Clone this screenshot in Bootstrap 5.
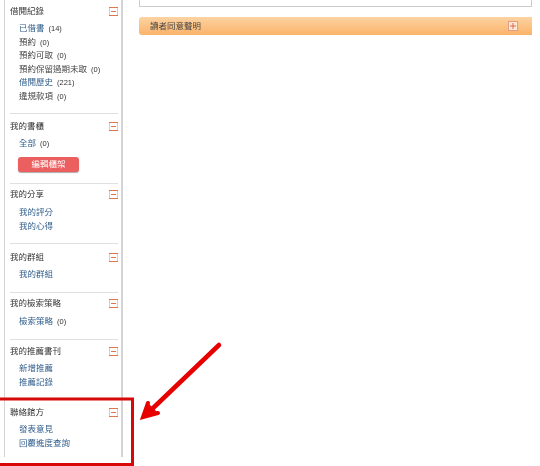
<!DOCTYPE html>
<html lang="zh-Hant">
  <head>
    <meta charset="UTF-8" />
    <meta name="viewport" content="width=device-width, initial-scale=1.0" />
    <title>我的圖書館</title>
    <link
      href="https://cdn.jsdelivr.net/npm/bootstrap@5.3.2/dist/css/bootstrap.min.css"
      rel="stylesheet"
    />
    <style>
      body {
        width: 540px;
        height: 466px;
        overflow: hidden;
        background: #fff;
        font-family: "Liberation Sans", "Noto Sans CJK TC", sans-serif;
        font-size: 8.5px;
        color: #333;
      }
      .side-panel {
        width: 119px;
        height: 457px;
        margin-left: 4px;
        border-left: 1px solid #d4d4d4;
        border-right: 2px solid #d4d4d4;
      }
      .side-sec {
        margin: 0 3px 0 5px;
        border-bottom: 1px solid #e0e0e0;
      }
      .side-sec:nth-child(1) { height: 114px; padding-top: 4px; }
      .side-sec:nth-child(2) { height: 70px; padding-top: 5px; }
      .side-sec:nth-child(3) { height: 60px; padding-top: 3px; }
      .side-sec:nth-child(4) { height: 49px; padding-top: 6px; }
      .side-sec:nth-child(5) { height: 47px; padding-top: 3px; }
      .side-sec:nth-child(6) { height: 58px; padding-top: 4px; border-bottom: 0; }
      .side-sec:nth-child(7) { padding-top: 7px; border-bottom: 0; }
      .side-sec:nth-child(3) .sec-links,
      .side-sec:nth-child(5) .sec-links {
        margin-top: 5px;
      }
      .sec-head {
        line-height: 14px;
        color: #333;
      }
      .sec-links {
        margin-top: 4px;
        padding-left: 9px;
        line-height: 13.6px;
      }
      .sec-links a {
        color: #2f5d8c;
        text-decoration: none;
      }
      .sec-links .plain {
        color: #444;
      }
      .sec-count {
        font-size: 7.5px;
        margin-left: 4px;
        color: #333;
      }
      .edit-btn {
        display: block;
        width: 61px;
        height: 15px;
        margin: 6px 0 0 8px;
        padding: 0;
        font-size: 8.5px;
        line-height: 15px;
        color: #fff;
        background: #ec5f5f;
        border: 0;
        border-radius: 3px;
        box-shadow: 0 1px 1px #aaa;
      }
      .main-col {
        width: 393px;
        margin-left: 16px;
      }
      .top-box {
        height: 7px;
        border: 1px solid #ccc;
        border-top: 0;
      }
      .notice-bar {
        height: 18px;
        margin-top: 10px;
        padding: 0 14px 0 11px;
        line-height: 18px;
        color: #444;
        background: linear-gradient(#fcd3a2, #fbb36a);
        border-radius: 3px 0 0 3px;
      }
      .soft-text {
        filter: blur(0.35px);
      }
      .mark-over {
        position: absolute;
        left: 0;
        top: 0;
      }
    </style>
  </head>
  <body class="position-relative">
    <div class="d-flex align-items-start">
      <!-- Sidebar -->
      <div class="side-panel flex-shrink-0">
        <div class="side-sec">
          <div class="sec-head d-flex justify-content-between align-items-center">
            <span class="soft-text">借閱紀錄</span>
            <svg width="9" height="9" viewBox="0 0 9 9"><rect x="0.5" y="0.5" width="8" height="8" fill="none" stroke="#eec4b2" /><path d="M0 0.5H9M0 8.5H9M2 4.5H7" stroke="#e0764f" fill="none" /></svg>
          </div>
          <div class="sec-links soft-text">
            <div><a href="#">已借書</a><span class="sec-count">(14)</span></div>
            <div><a class="plain" href="#">預約</a><span class="sec-count">(0)</span></div>
            <div><a class="plain" href="#">預約可取</a><span class="sec-count">(0)</span></div>
            <div><a class="plain" href="#">預約保留過期未取</a><span class="sec-count">(0)</span></div>
            <div><a href="#">借閱歷史</a><span class="sec-count">(221)</span></div>
            <div><a class="plain" href="#">違規款項</a><span class="sec-count">(0)</span></div>
          </div>
        </div>
        <div class="side-sec">
          <div class="sec-head d-flex justify-content-between align-items-center">
            <span class="soft-text">我的書櫃</span>
            <svg width="9" height="9" viewBox="0 0 9 9"><rect x="0.5" y="0.5" width="8" height="8" fill="none" stroke="#eec4b2" /><path d="M0 0.5H9M0 8.5H9M2 4.5H7" stroke="#e0764f" fill="none" /></svg>
          </div>
          <div class="sec-links soft-text">
            <div><a href="#">全部</a><span class="sec-count">(0)</span></div>
          </div>
          <button type="button" class="btn edit-btn soft-text">編輯櫃架</button>
        </div>
        <div class="side-sec">
          <div class="sec-head d-flex justify-content-between align-items-center">
            <span class="soft-text">我的分享</span>
            <svg width="9" height="9" viewBox="0 0 9 9"><rect x="0.5" y="0.5" width="8" height="8" fill="none" stroke="#eec4b2" /><path d="M0 0.5H9M0 8.5H9M2 4.5H7" stroke="#e0764f" fill="none" /></svg>
          </div>
          <div class="sec-links soft-text">
            <div><a href="#">我的評分</a></div>
            <div><a href="#">我的心得</a></div>
          </div>
        </div>
        <div class="side-sec">
          <div class="sec-head d-flex justify-content-between align-items-center">
            <span class="soft-text">我的群組</span>
            <svg width="9" height="9" viewBox="0 0 9 9"><rect x="0.5" y="0.5" width="8" height="8" fill="none" stroke="#eec4b2" /><path d="M0 0.5H9M0 8.5H9M2 4.5H7" stroke="#e0764f" fill="none" /></svg>
          </div>
          <div class="sec-links soft-text">
            <div><a href="#">我的群組</a></div>
          </div>
        </div>
        <div class="side-sec">
          <div class="sec-head d-flex justify-content-between align-items-center">
            <span class="soft-text">我的檢索策略</span>
            <svg width="9" height="9" viewBox="0 0 9 9"><rect x="0.5" y="0.5" width="8" height="8" fill="none" stroke="#eec4b2" /><path d="M0 0.5H9M0 8.5H9M2 4.5H7" stroke="#e0764f" fill="none" /></svg>
          </div>
          <div class="sec-links soft-text">
            <div><a href="#">檢索策略</a><span class="sec-count">(0)</span></div>
          </div>
        </div>
        <div class="side-sec">
          <div class="sec-head d-flex justify-content-between align-items-center">
            <span class="soft-text">我的推薦書刊</span>
            <svg width="9" height="9" viewBox="0 0 9 9"><rect x="0.5" y="0.5" width="8" height="8" fill="none" stroke="#eec4b2" /><path d="M0 0.5H9M0 8.5H9M2 4.5H7" stroke="#e0764f" fill="none" /></svg>
          </div>
          <div class="sec-links soft-text">
            <div><a href="#">新增推薦</a></div>
            <div><a href="#">推薦記錄</a></div>
          </div>
        </div>
        <div class="side-sec">
          <div class="sec-head d-flex justify-content-between align-items-center">
            <span class="soft-text">聯絡館方</span>
            <svg width="9" height="9" viewBox="0 0 9 9"><rect x="0.5" y="0.5" width="8" height="8" fill="none" stroke="#eec4b2" /><path d="M0 0.5H9M0 8.5H9M2 4.5H7" stroke="#e0764f" fill="none" /></svg>
          </div>
          <div class="sec-links soft-text">
            <div><a href="#">發表意見</a></div>
            <div><a href="#">回覆進度查詢</a></div>
          </div>
        </div>
      </div>

      <!-- Main -->
      <div class="main-col">
        <div class="top-box"></div>
        <div class="notice-bar d-flex justify-content-between align-items-center">
          <span class="soft-text">讀者同意聲明</span>
          <svg width="10" height="10" viewBox="0 0 10 10"><rect x="0.5" y="0.5" width="9" height="9" fill="#fde9d8" stroke="#e89a80" /><path d="M5 2V8M2 5H8" stroke="#d9694d" fill="none" /></svg>
        </div>
      </div>
    </div>

    <!-- Red annotation -->
    <svg class="mark-over" width="540" height="466" viewBox="0 0 540 466">
      <path d="M0 399H132.500V464.500H0" fill="none" stroke="#d80808" stroke-width="3" />
      <path d="M219 345L150 411" fill="none" stroke="#e60000" stroke-width="4.500" stroke-linecap="round" />
      <path d="M148 403L143 417L158 413" fill="#e60000" stroke="#e60000" stroke-width="4" stroke-linecap="round" stroke-linejoin="miter" />
    </svg>
  </body>
</html>
